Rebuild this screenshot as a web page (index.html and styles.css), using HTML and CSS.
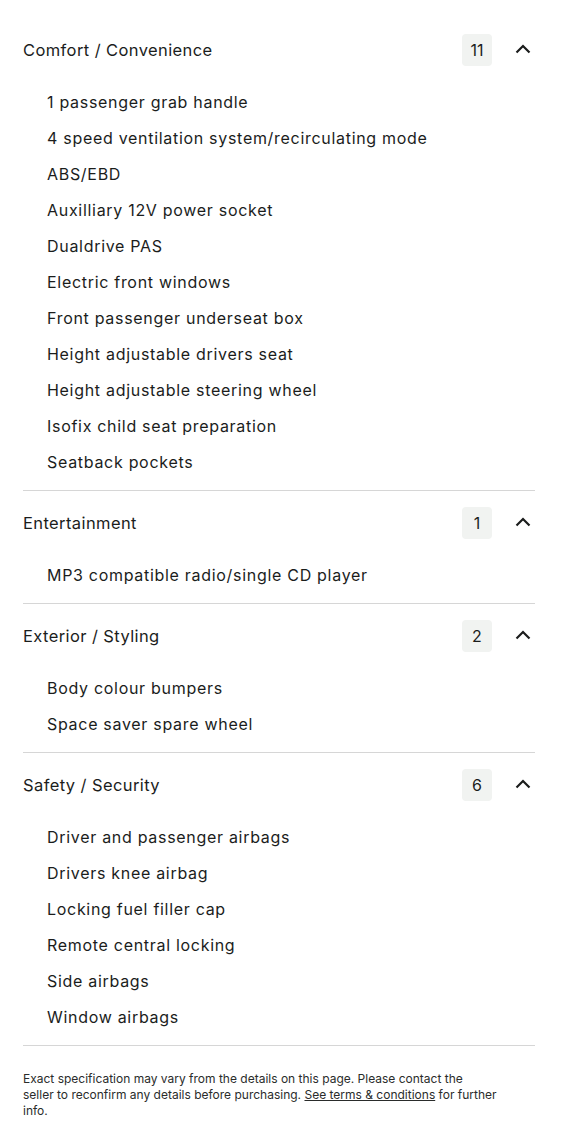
FILE: index.html
```html
<!DOCTYPE html>
<html lang="en">
<head>
  <meta charset="UTF-8" />
  <meta name="viewport" content="width=device-width, initial-scale=1.0"/>
  <title>Specification</title>
  <link rel="stylesheet" href="styles.css">
</head>
<body>

  <div class="spec">

    <!-- Comfort / Convenience -->
    <div class="section">
      <div class="section-header">
        <span class="section-title">Comfort / Convenience</span>
        <span class="count">11</span>
        <svg class="chevron" viewBox="0 0 16 10" width="16" height="10"><path d="M1.5 8.5 L8 2 L14.5 8.5"/></svg>
      </div>
      <ul class="items">
        <li>1 passenger grab handle</li>
        <li>4 speed ventilation system/recirculating mode</li>
        <li>ABS/EBD</li>
        <li>Auxilliary 12V power socket</li>
        <li>Dualdrive PAS</li>
        <li>Electric front windows</li>
        <li>Front passenger underseat box</li>
        <li>Height adjustable drivers seat</li>
        <li>Height adjustable steering wheel</li>
        <li>Isofix child seat preparation</li>
        <li>Seatback pockets</li>
      </ul>
    </div>

    <!-- Entertainment -->
    <div class="section">
      <div class="section-header">
        <span class="section-title">Entertainment</span>
        <span class="count">1</span>
        <svg class="chevron" viewBox="0 0 16 10" width="16" height="10"><path d="M1.5 8.5 L8 2 L14.5 8.5"/></svg>
      </div>
      <ul class="items">
        <li>MP3 compatible radio/single CD player</li>
      </ul>
    </div>

    <!-- Exterior / Styling -->
    <div class="section">
      <div class="section-header">
        <span class="section-title">Exterior / Styling</span>
        <span class="count">2</span>
        <svg class="chevron" viewBox="0 0 16 10" width="16" height="10"><path d="M1.5 8.5 L8 2 L14.5 8.5"/></svg>
      </div>
      <ul class="items">
        <li>Body colour bumpers</li>
        <li>Space saver spare wheel</li>
      </ul>
    </div>

    <!-- Safety / Security -->
    <div class="section">
      <div class="section-header">
        <span class="section-title">Safety / Security</span>
        <span class="count">6</span>
        <svg class="chevron" viewBox="0 0 16 10" width="16" height="10"><path d="M1.5 8.5 L8 2 L14.5 8.5"/></svg>
      </div>
      <ul class="items">
        <li>Driver and passenger airbags</li>
        <li>Drivers knee airbag</li>
        <li>Locking fuel filler cap</li>
        <li>Remote central locking</li>
        <li>Side airbags</li>
        <li>Window airbags</li>
      </ul>
    </div>

    <p class="disclaimer">
      Exact specification may vary from the details on this page. Please contact the<br>
      seller to reconfirm any details before purchasing. <a href="#">See terms &amp; conditions</a> for further
      info.
    </p>

  </div>

</body>
</html>
```

FILE: styles.css
```css
body {
  font-family: Inter, "Noto Sans", sans-serif;
  background-color: white;
  color: #1b1d1c;
  margin: 0;
  padding: 0;
}

.spec {
  padding: 18px 26px 0 23px;
}

.section {
  padding: 16px 0 10px;
  border-bottom: 1px solid #d6d6d6;
}

.section-header {
  display: flex;
  align-items: center;
  height: 32px;
}

.section-title {
  flex: 1;
  font-size: 16.5px;
  letter-spacing: 0.4px;
}

.count {
  width: 30px;
  height: 32px;
  border-radius: 4px;
  background-color: #f1f3f1;
  display: flex;
  align-items: center;
  justify-content: center;
  font-size: 16px;
}

.chevron {
  margin: 0 4px 2px 23px;
  fill: none;
  stroke: #1b1d1c;
  stroke-width: 2.2;
}

.items {
  list-style: none;
  margin: 18px 0 0;
  padding: 0 0 0 24px;
}

.items li {
  height: 36px;
  line-height: 36px;
  font-size: 16px;
  letter-spacing: 0.7px;
}

.disclaimer {
  margin: 25px 0 0;
  max-width: 477px;
  font-size: 12px;
  line-height: 16px;
  color: #2a2c2b;
}

.disclaimer a {
  color: inherit;
}
```
